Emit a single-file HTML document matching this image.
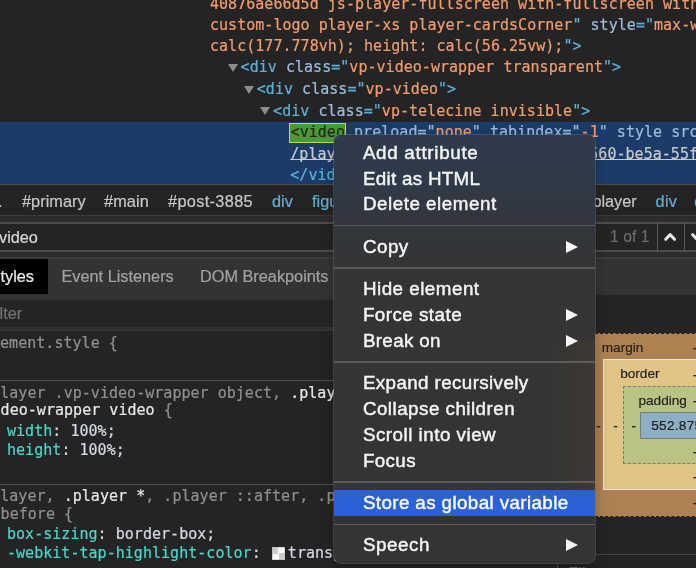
<!DOCTYPE html>
<html lang="en">
<head>
<meta charset="utf-8">
<title>DevTools – Store as global variable</title>
<style>
  html, body { margin: 0; padding: 0; }
  body {
    width: 696px; height: 568px; overflow: hidden; position: relative;
    background: #242424;
    font-family: "Liberation Sans", sans-serif;
    -webkit-font-smoothing: antialiased;
  }
  #root { position: absolute; left: 0; top: 0; width: 696px; height: 568px; overflow: hidden; will-change: transform; }
  .abs { position: absolute; }
  /* monospace code lines */
  .m {
    position: absolute; white-space: pre; margin: 0;
    font-family: "DejaVu Sans Mono", "Liberation Mono", monospace;
    font-size: 15px; line-height: 20px; height: 20px; letter-spacing: 0.03px;
    -webkit-text-stroke: 0.22px currentColor;
  }
  /* sans ui text */
  .s {
    position: absolute; white-space: pre; margin: 0;
    font-family: "Liberation Sans", sans-serif;
    font-size: 16.3px; line-height: 20px; height: 20px;
    -webkit-text-stroke: 0.2px currentColor;
  }
  .o { color: #f29b6c; }   /* attribute value */
  .tg { color: #5db0d7; }  /* tag */
  .an { color: #9bbbdc; }  /* attribute name */
  .tri { position: absolute; width: 0; height: 0; border-left: 5.3px solid transparent; border-right: 5.3px solid transparent; border-top: 8.3px solid #8d8d8d; margin-left: -0.3px; margin-top: -0.3px; }
  .gy { color: #8f8f8f; }
  .wh { color: #e6e6e6; }
  .pn { color: #4ad6ca; }
  .pv { color: #d4d8e4; }
  .hl { position: absolute; left: 0; width: 696px; }

  /* context menu */
  #menu {
    position: absolute; left: 334.4px; top: 135.3px; width: 260.4px; height: 427.8px;
    border-radius: 6.5px; overflow: hidden;
    background:
      linear-gradient(to bottom, rgba(38,68,108,0.42) 0px, rgba(38,68,108,0.36) 45px, rgba(40,64,98,0.14) 95px, rgba(40,60,90,0) 135px),
      linear-gradient(to left, rgba(120,84,40,0.13) 0px, rgba(120,84,40,0.05) 30px, rgba(120,84,40,0) 70px) no-repeat 0 205px / 100% 175px,
      #343434;
    box-shadow: 0 0 0 0.7px rgba(120,120,120,0.55), 0 5px 14px rgba(0,0,0,0.28);
  }
  .mi {
    position: absolute; left: 28.5px; white-space: pre;
    font-family: "Liberation Sans", sans-serif;
    font-size: 18.8px; line-height: 26px; height: 26px; margin-top: -1.2px; color: #f4f4f4; letter-spacing: 0.55px; -webkit-text-stroke: 0.45px #f4f4f4;
  }
  .sep { position: absolute; left: 0; width: 100%; height: 1.5px; background: rgba(120,124,130,0.55); }
  .arr { position: absolute; left: 232.3px; width: 0; height: 0; border-top: 6.9px solid transparent; border-bottom: 6.9px solid transparent; border-left: 12.6px solid #f6f6f6; margin-top: -0.3px; margin-left: -0.3px; }
  .bm { font-size: 13.6px; color: #1f1f1f; }
</style>
</head>
<body>
<div id="root">

  <!-- ===== Elements tree ===== -->
  <div class="hl" style="top:121.9px;height:62.3px;background:#1b3c68;"></div>

  <div class="m o" style="left:210px;top:-6.1px;">40876ae66d5d js-player-fullscreen with-fullscreen with-sticky</div>
  <div class="m o" style="left:210px;top:15.2px;">custom-logo player-xs player-cardsCorner<span class="tg">"</span> <span class="an">style</span><span class="tg">="</span>max-width:</div>
  <div class="m o" style="left:210px;top:36px;">calc(177.778vh); height: calc(56.25vw);<span class="tg">"&gt;</span></div>

  <div class="tri" style="left:228.3px;top:64.4px;"></div>
  <div class="m tg" style="left:240.6px;top:57px;">&lt;div <span class="an">class</span>="<span class="o">vp-video-wrapper transparent</span>"&gt;</div>
  <div class="tri" style="left:243.9px;top:86.4px;"></div>
  <div class="m tg" style="left:256.8px;top:78.9px;">&lt;div <span class="an">class</span>="<span class="o">vp-video</span>"&gt;</div>
  <div class="tri" style="left:260.5px;top:107.7px;"></div>
  <div class="m tg" style="left:273.1px;top:100.9px;">&lt;div <span class="an">class</span>="<span class="o">vp-telecine invisible</span>"&gt;</div>

  <div class="abs" style="left:289.3px;top:123px;width:55.2px;height:17.8px;background:#4a9a33;border:1.4px solid #cfd447;"></div>
  <div class="m an" style="left:290.6px;top:122.2px;"><span style="color:#1d2a1d;">&lt;video</span> <span class="an">preload</span>="<span class="o">none</span>" <span class="an">tabindex</span>="<span class="o">-1</span>" <span class="an">style</span> <span class="an">src</span>="</div>
  <div class="m" style="left:290.3px;top:143.5px;color:#c9c9c9;text-decoration:underline;text-decoration-thickness:1.3px;text-underline-offset:0.4px;text-decoration-skip-ink:none;">/player/media/vid/4b1d9e37-8a2c-4560-be5a-55f2c8d0a7e1.mp4</div>
  <div class="m tg" style="left:290.3px;top:164.9px;">&lt;/video&gt;</div>

  <!-- border under tree -->
  <div class="hl" style="top:184px;height:1.4px;background:#4b4b4b;"></div>

  <!-- ===== Breadcrumbs ===== -->
  <div class="s" style="left:-2px;top:190.7px;color:#c8c8c8;">.</div>
  <div class="s" style="left:22px;top:190.7px;color:#c8c8c8;letter-spacing:0.05px;">#primary</div>
  <div class="s" style="left:104px;top:190.7px;color:#c8c8c8;letter-spacing:0.1px;">#main</div>
  <div class="s" style="left:168px;top:190.7px;color:#c8c8c8;letter-spacing:0.35px;">#post-3885</div>
  <div class="s" style="left:272px;top:190.7px;color:#5db0d7;">div</div>
  <div class="s" style="left:312px;top:190.7px;color:#5db0d7;">figure</div>
  <div class="s" style="left:592.4px;top:190.7px;color:#c8c8c8;">player</div>
  <div class="s" style="left:655.6px;top:190.7px;color:#5db0d7;letter-spacing:0.25px;">div</div>
  <div class="s" style="left:694.2px;top:190.7px;color:#5db0d7;">div</div>

  <!-- ===== Search bar ===== -->
  <div class="hl" style="top:215px;height:8px;background:#2d2d2d;"></div>
  <div class="hl" style="top:215px;height:1.3px;background:#3a3a3a;"></div>
  <div class="hl" style="top:222px;height:1.6px;background:#4d4d4d;"></div>
  <div class="hl" style="top:250.2px;height:1.6px;background:#4d4d4d;"></div>
  <div class="hl" style="top:251.8px;height:7.1px;background:#2d2d2d;"></div>
  <div class="hl" style="top:257.4px;height:1.4px;background:#3d3d3d;"></div>
  <div class="s" style="left:-1px;top:227.3px;color:#d8d8d8;">video</div>
  <div class="s" style="left:610px;top:227.3px;color:#6c6c6c;font-size:15.6px;letter-spacing:0.1px;">1 of 1</div>
  <div class="abs" style="left:656.5px;top:223px;width:1.3px;height:28px;background:#5a5a5a;"></div>
  <div class="abs" style="left:683.8px;top:223px;width:1.3px;height:28px;background:#5a5a5a;"></div>
  <svg class="abs" style="left:662px;top:230px;" width="16" height="14" viewBox="0 0 16 14"><path d="M3.7 9.3 L8.1 4.6 L12.5 9.3" fill="none" stroke="#e8e8e8" stroke-width="3" stroke-linecap="round" stroke-linejoin="round"/></svg>
  <svg class="abs" style="left:689px;top:230px;" width="16" height="14" viewBox="0 0 16 14"><path d="M3.7 4.7 L8.1 9.4 L12.5 4.7" fill="none" stroke="#e8e8e8" stroke-width="3" stroke-linecap="round" stroke-linejoin="round"/></svg>

  <!-- ===== Tabs ===== -->
  <div class="hl" style="top:258.8px;height:40.8px;background:#333333;"></div>
  <div class="abs" style="left:0;top:258.8px;width:47.5px;height:35.2px;background:#000;"></div>
  <div class="s" style="left:-10.4px;top:266px;color:#ececec;">Styles</div>
  <div class="s" style="left:61.5px;top:266px;color:#a3a3a3;">Event Listeners</div>
  <div class="s" style="left:200px;top:266px;color:#a3a3a3;">DOM Breakpoints</div>
  

  <!-- ===== Filter row ===== -->
  <div class="hl" style="top:299.6px;height:28px;background:#252525;"></div>
  <div class="hl" style="top:327.1px;height:4.1px;background:#333333;"></div>
  <div class="s" style="left:-14px;top:303px;color:#707070;">Filter</div>

  <!-- ===== Styles ===== -->
  <div class="m gy" style="left:-18.1px;top:332.5px;">element.style {</div>

  <div class="hl" style="top:380px;height:1.3px;background:#4e4e4e;"></div>
  <div class="m gy" style="left:-17.9px;top:382.7px;">.player .vp-video-wrapper object, <span class="wh">.player .vp-vi</span></div>
  <div class="m wh" style="left:0.6px;top:399.8px;">deo-wrapper video <span class="gy">{</span></div>
  <div class="m pv" style="left:7px;top:420.6px;"><span class="pn">width</span>: 100%;</div>
  <div class="m pv" style="left:7px;top:439.5px;"><span class="pn">height</span>: 100%;</div>

  <div class="hl" style="top:483.7px;height:1.3px;background:#4e4e4e;"></div>
  <div class="m gy" style="left:-17.9px;top:486.4px;">.player, <span class="wh">.player *</span>, .player ::after, .player ::</div>
  <div class="m gy" style="left:0.6px;top:503.8px;">before {</div>
  <div class="m pv" style="left:7px;top:524.3px;"><span class="pn">box-sizing</span>: border-box;</div>
  <div class="m pv" style="left:7px;top:543.2px;"><span class="pn">-webkit-tap-highlight-color</span>: <span style="display:inline-block;width:13.4px;height:13.2px;margin:0 2.9px 0 1.8px;vertical-align:-2px;background:conic-gradient(#fafafa 0 25%, #cdcdcd 0 50%, #fafafa 0 75%, #cdcdcd 0);box-shadow:inset 0 0 0 0.6px #bbb;"></span>transparent;</div>

  <!-- ===== Right sidebar (computed / box model) ===== -->
  <div class="abs" style="left:560px;top:295px;width:136px;height:274px;background:#242424;"></div>
  <div class="abs" style="left:560px;top:553.9px;width:136px;height:1.3px;background:#444;"></div>
  <div class="abs" style="left:556.8px;top:555px;width:1.3px;height:14px;background:#4a4a4a;"></div>
  <div class="s" style="left:568.5px;top:562.5px;color:#707070;">Filter</div>

  <!-- box model -->
  <div class="abs" style="left:590px;top:333.4px;width:120px;height:181.4px;background:#ae8152;border-top:1.4px dashed #1c1c1c;border-bottom:1.4px dashed #1c1c1c;"></div>
  <div class="abs" style="left:603.2px;top:359.4px;width:110px;height:128.4px;background:#e2c486;border:1.5px solid #ebe6da;"></div>
  <div class="abs" style="left:623.1px;top:385.9px;width:90px;height:76.6px;background:#b8c483;border:1.3px dashed #7a7a7a;"></div>
  <div class="abs" style="left:639.8px;top:411.5px;width:80px;height:25.2px;background:#8cafc2;border:1.2px solid #7a7a7a;"></div>
  <div class="s bm" style="left:601.8px;top:337.9px;">margin</div>
  <div class="s bm" style="left:620.2px;top:364.3px;">border</div>
  <div class="s bm" style="left:638.5px;top:390.7px;">padding</div>
  <div class="s bm" style="left:651.2px;top:416.3px;letter-spacing:0.3px;">552.875 × 311</div>
  <div class="s bm" style="left:596.2px;top:415.9px;">-</div>
  <div class="s bm" style="left:613.2px;top:415.9px;">-</div>
  <div class="s bm" style="left:631.5px;top:415.9px;">-</div>
  <div class="s bm" style="left:692.8px;top:338.3px;">-</div>
  <div class="s bm" style="left:692.8px;top:364.5px;">-</div>
  <div class="s bm" style="left:692.8px;top:391px;">-</div>
  <div class="s bm" style="left:692.8px;top:441.5px;">-</div>
  <div class="s bm" style="left:692.8px;top:467px;">-</div>
  <div class="s bm" style="left:692.8px;top:493.3px;">-</div>

  <!-- ===== Context menu ===== -->
  <div id="menu">
    <div class="mi" style="top:5.5px;letter-spacing:0.7px;">Add attribute</div>
    <div class="mi" style="top:31.4px;letter-spacing:0.3px;">Edit as HTML</div>
    <div class="mi" style="top:57.3px;letter-spacing:0.53px;">Delete element</div>
    <div class="sep" style="top:89.7px;"></div>
    <div class="mi" style="top:99.6px;letter-spacing:0.49px;">Copy</div>
    <div class="arr" style="top:105.6px;"></div>
    <div class="sep" style="top:132px;"></div>
    <div class="mi" style="top:141.9px;letter-spacing:0.5px;">Hide element</div>
    <div class="mi" style="top:167.8px;letter-spacing:0.48px;">Force state</div>
    <div class="arr" style="top:173.8px;"></div>
    <div class="mi" style="top:193.7px;letter-spacing:0.35px;">Break on</div>
    <div class="arr" style="top:199.7px;"></div>
    <div class="sep" style="top:226.1px;"></div>
    <div class="mi" style="top:236px;letter-spacing:0.39px;">Expand recursively</div>
    <div class="mi" style="top:261.9px;letter-spacing:0.48px;">Collapse children</div>
    <div class="mi" style="top:287.8px;letter-spacing:0.5px;">Scroll into view</div>
    <div class="mi" style="top:313.7px;letter-spacing:0.38px;">Focus</div>
    <div class="sep" style="top:346.1px;"></div>
    <div class="abs" style="left:0;top:355px;width:100%;height:25.3px;background:#2a62d5;"></div>
    <div class="mi" style="top:356px;color:#fff;letter-spacing:0.39px;">Store as global variable</div>
    <div class="sep" style="top:388.4px;"></div>
    <div class="mi" style="top:398.3px;letter-spacing:0.56px;">Speech</div>
    <div class="arr" style="top:404.3px;"></div>
  </div>

</div>
</body>
</html>
